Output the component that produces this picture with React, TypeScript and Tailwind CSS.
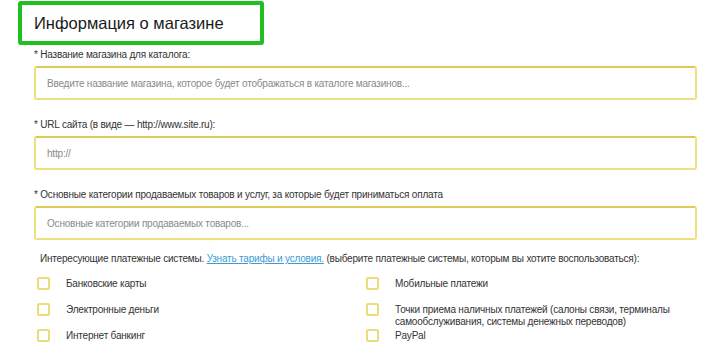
import React from 'react';

const fields = [
  {
    label: '* Название магазина для каталога:',
    placeholder: 'Введите название магазина, которое будет отображаться в каталоге магазинов...',
  },
  {
    label: '* URL сайта (в виде — http://www.site.ru):',
    placeholder: 'http://',
  },
  {
    label: '* Основные категории продаваемых товаров и услуг, за которые будет приниматься оплата',
    placeholder: 'Основные категории продаваемых товаров...',
  },
];

const options = [
  'Банковские карты',
  'Мобильные платежи',
  'Электронные деньги',
  'Точки приема наличных платежей (салоны связи, терминалы самообслуживания, системы денежных переводов)',
  'Интернет банкинг',
  'PayPal',
];

function Checkbox() {
  return <span className="h-[13px] w-[13px] shrink-0 rounded-[2px] border-2 border-[#ebdc7c] bg-white" />;
}

function Option({ text }: { text: string }) {
  return (
    <label className="flex h-[26px] items-start gap-[16px]">
      <Checkbox />
      <span className="mt-[1px] max-w-[290px] text-[10px] leading-[11.5px] tracking-[-0.2px] text-[#333]">{text}</span>
    </label>
  );
}

export default function App() {
  return (
    <div className="h-[356px] w-[725px] overflow-hidden bg-white font-['Liberation_Sans',Arial,sans-serif] text-[#333]">
      <div className="ml-[18px] mt-[1px] flex h-[44px] w-[246px] items-center rounded-[3px] border-[4px] border-[#22bf22] pl-[12px]">
        <h1 className="whitespace-nowrap text-[16.5px] font-normal leading-none text-[#1a1a1a]">Информация о магазине</h1>
      </div>

      <div className="pl-[34px] pr-[28px]">
        {fields.map((field, i) => (
          <div key={i} className={i === 0 ? 'mt-[3px]' : 'mt-[18px]'}>
            <div className="whitespace-nowrap text-[10px] leading-[14px] tracking-[-0.2px] text-[#333]">{field.label}</div>
            <div className="mt-[4px] flex h-[34px] items-center rounded-[3px] border-2 border-[#ece17c] border-t-[#dccb56] pl-[11px] text-[10px] tracking-[-0.2px] text-[#8a8a8a]">
              {field.placeholder}
            </div>
          </div>
        ))}

        <p className="mt-[12px] whitespace-nowrap pl-[6px] text-[10px] leading-[14px] tracking-[-0.2px] text-[#333]">
          Интересующие платежные системы.{' '}
          <a className="text-[#3d9bd1] underline">Узнать тарифы и условия.</a> (выберите платежные системы, которым вы
          хотите воспользоваться):
        </p>

        <div className="mt-[11px] grid grid-cols-[329px_1fr] pl-[3px]">
          {options.map((o) => (
            <Option key={o} text={o} />
          ))}
        </div>
      </div>
    </div>
  );
}
